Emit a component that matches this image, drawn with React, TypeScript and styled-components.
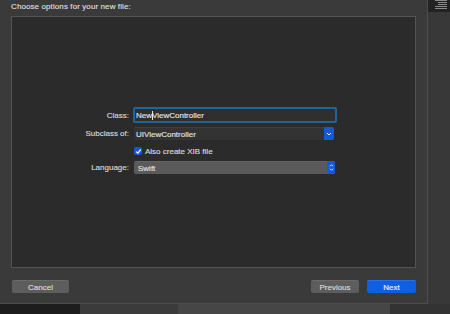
import React from "react";
import styled, { createGlobalStyle } from "styled-components";

const Global = createGlobalStyle`
  html, body { margin: 0; padding: 0; background: #333; }
  body { font-family: "Liberation Sans", Arial, sans-serif; -webkit-text-stroke: 0.15px currentColor; }
`;

const Screen = styled.div`
  width: 450px;
  height: 314px;
  display: grid;
  grid-template-rows: 304px 10px;
  overflow: hidden;
`;

const TopArea = styled.div`
  display: grid;
  grid-template-columns: 428px 22px;
`;

const Sheet = styled.div`
  background: #3a3a3a;
  border-right: 1px solid #4d4d4d;
  border-bottom: 1px solid #4d4d4d;
  display: flex;
  flex-direction: column;
  padding: 0 11px 0 11px;
  box-sizing: border-box;
`;

const Title = styled.div`
  height: 16px;
  line-height: 13px;
  font-size: 8px;
  color: #dedede;
  letter-spacing: 0.1px;
`;

const Box = styled.div`
  height: 252px;
  box-sizing: border-box;
  border: 1px solid #535353;
  background: #2b2b2b;
  padding: 90px 0 0 0;
  display: flex;
  flex-direction: column;
`;

const Row = styled.div<{ $h: number; $mt: number }>`
  display: grid;
  grid-template-columns: 117px 204px;
  column-gap: 4px;
  align-items: center;
  height: ${(p) => p.$h}px;
  margin-top: ${(p) => p.$mt}px;
`;

const Label = styled.div`
  text-align: right;
  font-size: 8px;
  color: #d8d8d8;
`;

const TextField = styled.div`
  height: 16px;
  box-sizing: border-box;
  border: 2px solid #1f6596;
  border-radius: 2px;
  background: #2f2f2f;
  display: flex;
  align-items: center;
  padding-left: 1px;
  font-size: 8px;
  color: #e2e2e2;
`;

const Cursor = styled.span`
  display: inline-block;
  width: 1px;
  height: 9px;
  background: #e8e8e8;
  margin: 0 -0.5px;
`;

const Popup = styled.div<{ $bg: string; $w: number }>`
  width: ${(p) => p.$w}px;
  height: 13px;
  margin-left: 1px;
  box-sizing: border-box;
  background: ${(p) => p.$bg};
  border-radius: 2px;
  border-top: 1px solid rgba(255, 255, 255, 0.06);
  display: flex;
  align-items: center;
  font-size: 8px;
  color: #e0e0e0;
`;

const PopupText = styled.span<{ $pl: number }>`
  flex: 1;
  padding-left: ${(p) => p.$pl}px;
`;

const BlueCap = styled.div<{ $w: number }>`
  width: ${(p) => p.$w}px;
  height: 13px;
  margin-top: -1px;
  background: #1459d8;
  border-radius: 0 2px 2px 0;
  display: flex;
  align-items: center;
  justify-content: center;
`;

const CheckRow = styled.div`
  display: flex;
  align-items: center;
  gap: 3px;
  margin-left: 1px;
  font-size: 8px;
  color: #dcdcdc;
`;

const CheckBox = styled.div`
  width: 8px;
  height: 8px;
  border-radius: 2px;
  background: #1459d8;
  display: flex;
  align-items: center;
  justify-content: center;
`;

const ButtonRow = styled.div`
  display: flex;
  align-items: center;
  margin-top: 12px;
  padding-left: 1px;
  gap: 8px;
`;

const Button = styled.div<{ $w: number; $primary?: boolean }>`
  width: ${(p) => p.$w}px;
  height: 12px;
  border-radius: 2px;
  background: ${(p) => (p.$primary ? "#0f5fe3" : "#5d5d5d")};
  border-top: 1px solid ${(p) => (p.$primary ? "#2a71e8" : "#6a6a6a")};
  display: flex;
  align-items: center;
  justify-content: center;
  font-size: 8px;
  color: ${(p) => (p.$primary ? "#f2f2f2" : "#dadada")};
`;

const Spacer = styled.div`
  flex: 1;
`;

const RightPanel = styled.div`
  background: #383838;
  display: flex;
  flex-direction: column;
`;

const IconCorner = styled.div`
  height: 12px;
  background: #222;
  display: flex;
  justify-content: flex-end;
  padding-right: 3px;
`;

const BottomStrip = styled.div`
  display: grid;
  grid-template-columns: 80px 98px 212px 60px;
`;

const Seg = styled.div<{ $bg: string }>`
  background: ${(p) => p.$bg};
`;

export default function App() {
  return (
    <>
      <Global />
      <Screen>
        <TopArea>
          <Sheet>
            <Title>Choose options for your new file:</Title>
            <Box>
              <Row $h={16} $mt={0}>
                <Label>Class:</Label>
                <TextField>
                  New<Cursor />ViewController
                </TextField>
              </Row>
              <Row $h={13} $mt={4}>
                <Label>Subclass of:</Label>
                <Popup $bg="#333333" $w={200}>
                  <PopupText $pl={2}>UIViewController</PopupText>
                  <BlueCap $w={10}>
                    <svg width="6" height="4" viewBox="0 0 6 4">
                      <path d="M1 1 L3 3 L5 1" stroke="#fff" strokeWidth="1" fill="none" />
                    </svg>
                  </BlueCap>
                </Popup>
              </Row>
              <Row $h={12} $mt={5}>
                <div />
                <CheckRow>
                  <CheckBox>
                    <svg width="7" height="7" viewBox="0 0 7 7">
                      <path d="M1.2 3.6 L2.8 5.2 L5.8 1.5" stroke="#fff" strokeWidth="1.2" fill="none" />
                    </svg>
                  </CheckBox>
                  Also create XIB file
                </CheckRow>
              </Row>
              <Row $h={13} $mt={4}>
                <Label>Language:</Label>
                <Popup $bg="#5a5a5a" $w={201}>
                  <PopupText $pl={4}>Swift</PopupText>
                  <BlueCap $w={8}>
                    <svg width="5" height="9" viewBox="0 0 5 9">
                      <path d="M1 3.3 L2.5 1.8 L4 3.3 M1 5.7 L2.5 7.2 L4 5.7" stroke="#fff" strokeWidth="0.9" fill="none" />
                    </svg>
                  </BlueCap>
                </Popup>
              </Row>
            </Box>
            <ButtonRow>
              <Button $w={57}>Cancel</Button>
              <Spacer />
              <Button $w={48}>Previous</Button>
              <Button $w={49} $primary>
                Next
              </Button>
            </ButtonRow>
          </Sheet>
          <RightPanel>
            <IconCorner>
              <svg width="12" height="9" viewBox="0 0 12 9">
                <rect x="0" y="0" width="12" height="1" fill="#8a8a8a" />
                <rect x="3" y="2" width="9" height="1" fill="#8a8a8a" />
                <rect x="3" y="4" width="9" height="1" fill="#8a8a8a" />
                <rect x="0" y="6" width="12" height="1" fill="#8a8a8a" />
                <rect x="0" y="8" width="12" height="1" fill="#8a8a8a" />
              </svg>
            </IconCorner>
          </RightPanel>
        </TopArea>
        <BottomStrip>
          <Seg $bg="#1d1d1d" />
          <Seg $bg="#3b3b3b" />
          <Seg $bg="#464646" />
          <Seg $bg="#333333" />
        </BottomStrip>
      </Screen>
    </>
  );
}
